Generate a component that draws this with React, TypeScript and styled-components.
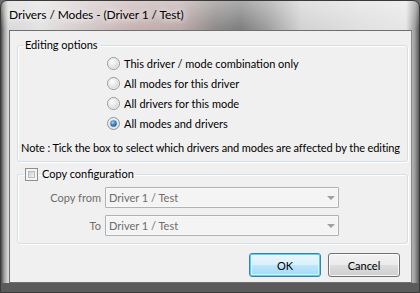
import React from "react";
import styled, { createGlobalStyle } from "styled-components";

const Global = createGlobalStyle`
  html, body { margin: 0; padding: 0; background: #6b6b6b; }
  body { width: 420px; height: 293px; overflow: hidden; }
  * { box-sizing: border-box; }
`;

const FONT = `Lato, "Liberation Sans", Arial, sans-serif`;

const Window = styled.div`
  width: 420px;
  height: 293px;
  display: flex;
  flex-direction: column;
  padding: 0 7px 9px 8px;
  border: 1px solid #3a3a3a;
  border-radius: 7px 7px 0 0;
  font-family: ${FONT};
  font-size: 11px;
  color: #000;
  background:
    linear-gradient(180deg, rgba(255,255,255,0.35) 0px, rgba(255,255,255,0) 28px),
    linear-gradient(90deg,
      #4a4a4a 0px, #9a9a9a 3px, #d9d9d9 7px, #e4e2e2 40px, #d6cccc 80px,
      #c7b3b3 130px, #bca9a9 180px, #8e8a8a 215px, #7f7f7f 240px,
      #9c9c9c 265px, #d2d2d2 300px, #e0e0e0 360px, #e6e6e6 405px, #9b9b9b 414px, #595959 418px);
  box-shadow: inset 0 -9px 0 0 #5b5b5b;
  overflow: hidden;
`;

const TitleBar = styled.div`
  height: 29px;
  display: flex;
  align-items: center;
  padding: 0 0 2px 0;
  font-size: 12px;
  letter-spacing: -0.1px;
  text-shadow: 0 0 6px #fff, 0 0 10px #fff;
  white-space: nowrap;
`;

const Client = styled.div`
  flex: 1;
  display: flex;
  flex-direction: column;
  background: #f0f0f0;
  border: 1px solid #6f6f6f;
  border-right-color: #8a8a8a;
  padding: 6px 11px 5px 7px;
`;

const Group = styled.fieldset<{ $gap?: number }>`
  margin: ${(p) => p.$gap ?? 0}px 0 0 0;
  padding: 0;
  border: 1px solid #d5dfe5;
  border-radius: 3px;
  box-shadow: inset 1px 1px 0 #fff, 1px 1px 0 #fff;
  width: 391px;
  min-width: 0;
`;

const Legend = styled.legend`
  margin-left: 5px;
  padding: 0 2px;
  line-height: 16px;
  height: 16px;
  display: flex;
  align-items: center;
  gap: 4px;
`;

const RadioList = styled.div`
  display: flex;
  flex-direction: column;
  margin: 0 0 0 89px;
`;

const RadioRow = styled.label`
  height: 20px;
  display: flex;
  align-items: center;
  gap: 4px;
`;

const RadioCircle = styled.span<{ $checked?: boolean }>`
  width: 13px;
  height: 13px;
  border-radius: 50%;
  border: 1px solid #929292;
  background: radial-gradient(circle at 40% 35%, #ffffff 0%, #f2f2f2 40%, #d4d4d4 100%);
  display: flex;
  align-items: center;
  justify-content: center;
  flex: none;
  &::after {
    content: "";
    width: 9px;
    height: 9px;
    border-radius: 50%;
    background: ${(p) =>
      p.$checked
        ? "radial-gradient(circle at 40% 35%, #a8d8f8 0%, #4a90d0 35%, #1d5a96 75%, #4f86b6 100%)"
        : "radial-gradient(circle at 35% 30%, #ffffff 0%, #e8e8e8 50%, #cfcfcf 100%)"};
    box-shadow: ${(p) => (p.$checked ? "0 0 0 1px #c7d7e6" : "0 0 0 1px #e6e6e6")};
    transform: ${(p) => (p.$checked ? "scale(0.72)" : "none")};
  }
`;

const Note = styled.div`
  margin: 7px 0 5px 3px;
  height: 16px;
  line-height: 16px;
  white-space: nowrap;
  letter-spacing: -0.1px;
`;

const CheckBox = styled.span`
  width: 13px;
  height: 13px;
  border: 1px solid #8f8f8f;
  background: #f4f4f4;
  padding: 2px;
  display: flex;
  flex: none;
  &::after {
    content: "";
    flex: 1;
    background: linear-gradient(135deg, #c9cdd2 0%, #e3e5e8 60%, #f4f4f4 100%);
    border: 1px solid #b9bdc2;
  }
`;

const FormGrid = styled.div`
  display: grid;
  grid-template-columns: 83px 234px;
  column-gap: 4px;
  row-gap: 7px;
  padding: 5px 0 7px 0;
`;

const FieldLabel = styled.div`
  text-align: right;
  color: #6d6d6d;
  line-height: 21px;
  height: 21px;
`;

const Combo = styled.div`
  height: 21px;
  border: 1px solid #adb2b5;
  background: #f4f4f4;
  color: #6d6d6d;
  display: flex;
  align-items: center;
  padding: 0 0 0 3px;
  border-radius: 1px;
  box-shadow: inset 0 0 0 1px #f9f9f9;
`;

const ComboText = styled.span`
  flex: 1;
`;

const ComboArrow = styled.span`
  width: 0;
  height: 0;
  border-left: 4px solid transparent;
  border-right: 4px solid transparent;
  border-top: 4px solid #a0a0a0;
  margin-right: 3px;
`;

const ButtonRow = styled.div`
  display: flex;
  justify-content: flex-end;
  gap: 7px;
  margin-top: 9px;
`;

const Button = styled.button<{ $default?: boolean }>`
  width: 72px;
  height: 24px;
  font-family: ${FONT};
  font-size: 11px;
  color: #000;
  border-radius: 3px;
  border: 1px solid ${(p) => (p.$default ? "#3c7fb1" : "#707070")};
  background: ${(p) =>
    p.$default
      ? "linear-gradient(180deg, #eaf6fd 0%, #d9f0fc 50%, #bee6fd 51%, #a7d9f5 100%)"
      : "linear-gradient(180deg, #f2f2f2 0%, #ebebeb 50%, #dddddd 51%, #cfcfcf 100%)"};
  box-shadow: ${(p) =>
    p.$default
      ? "inset 0 0 0 1px #48d8f6, inset 0 0 0 2px rgba(255,255,255,0.6)"
      : "inset 0 0 0 1px rgba(255,255,255,0.8)"};
  padding: 0;
`;

export default function App() {
  return (
    <>
      <Global />
      <Window>
        <TitleBar>Drivers / Modes - (Driver 1 / Test)</TitleBar>
        <Client>
          <Group>
            <Legend>Editing options</Legend>
            <RadioList>
              <RadioRow>
                <RadioCircle />
                This driver / mode combination only
              </RadioRow>
              <RadioRow>
                <RadioCircle />
                All modes for this driver
              </RadioRow>
              <RadioRow>
                <RadioCircle />
                All drivers for this mode
              </RadioRow>
              <RadioRow>
                <RadioCircle $checked />
                All modes and drivers
              </RadioRow>
            </RadioList>
            <Note>Note : Tick the box to select which drivers and modes are affected by the editing</Note>
          </Group>
          <Group $gap={4}>
            <Legend>
              <CheckBox />
              Copy configuration
            </Legend>
            <FormGrid>
              <FieldLabel>Copy from</FieldLabel>
              <Combo>
                <ComboText>Driver 1 / Test</ComboText>
                <ComboArrow />
              </Combo>
              <FieldLabel>To</FieldLabel>
              <Combo>
                <ComboText>Driver 1 / Test</ComboText>
                <ComboArrow />
              </Combo>
            </FormGrid>
          </Group>
          <ButtonRow>
            <Button $default>OK</Button>
            <Button>Cancel</Button>
          </ButtonRow>
        </Client>
      </Window>
    </>
  );
}
